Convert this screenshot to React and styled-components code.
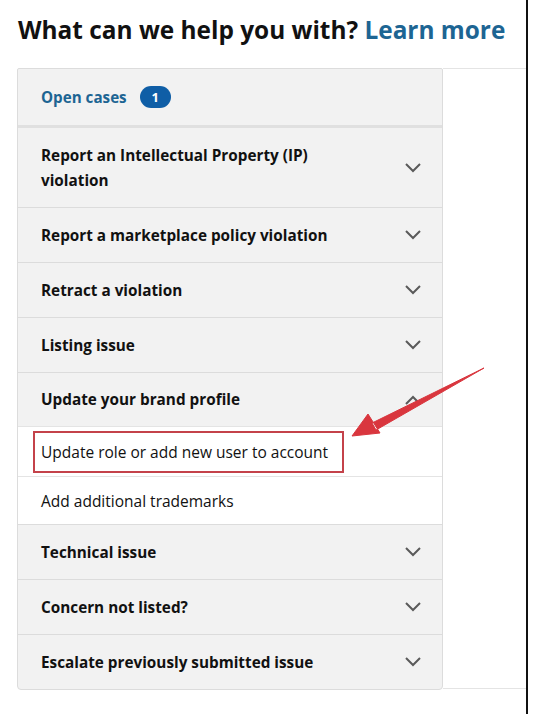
import React from "react";
import styled, { createGlobalStyle } from "styled-components";

const GlobalStyle = createGlobalStyle`
  html, body { margin: 0; padding: 0; background: #fff; }
  body { font-family: "Open Sans", "Noto Sans", sans-serif; color: #111; }
`;

const Page = styled.div`
  position: relative;
  width: 528px;
  height: 714px;
  box-sizing: border-box;
  border-right: 2px solid #111;
  padding: 14px 0 0 17px;
`;

const Heading = styled.h1`
  margin: 0 0 22px 1px;
  font-size: 24.4px;
  font-weight: 700;
  color: #111;
  line-height: 32px;
`;

const LearnMore = styled.a`
  color: #1d6593;
  text-decoration: none;
`;

const Content = styled.div`
  display: flex;
`;

const Panel = styled.div`
  width: 426px;
  box-sizing: border-box;
  background: #f2f2f2;
  border: 1px solid #dcdcdc;
  border-radius: 2px 2px 4px 4px;
`;

const Side = styled.div`
  flex: 1;
  height: 621px;
  box-sizing: border-box;
  border-top: 1px solid #e4e4e4;
  border-bottom: 1px solid #e4e4e4;
`;

const CasesBar = styled.div`
  display: flex;
  align-items: center;
  gap: 13px;
  height: 56px;
  padding-left: 23px;
  border-bottom: 3px solid #e0e0e0;
  font-size: 15.2px;
  font-weight: 700;
  color: #1d6593;
`;

const Badge = styled.span`
  display: inline-flex;
  align-items: center;
  justify-content: center;
  width: 31px;
  height: 22px;
  border-radius: 11px;
  background: #0f5ea6;
  color: #fff;
  font-size: 13px;
  font-weight: 700;
`;

const Row = styled.div`
  display: flex;
  align-items: center;
  justify-content: space-between;
  height: ${(p) => p.$h || 54}px;
  padding: 0 20px 0 23px;
  border-top: 1px solid #dcdcdc;
  font-size: 15.3px;
  font-weight: 700;
  line-height: 25px;
  color: #111;
  &:first-of-type { border-top: none; }
`;

const RowLabel = styled.span`
  max-width: 310px;
`;

const SubItem = styled.div`
  display: flex;
  align-items: center;
  height: ${(p) => p.$h || 49}px;
  padding-left: 23px;
  background: #fff;
  border-top: 1px solid #e4e4e4;
  font-size: 15.5px;
  color: #111;
`;

const Marked = styled.span`
  display: inline-block;
  margin-left: -8px;
  padding: 8px 14px 8px 6px;
  border: 2px solid #c4424a;
`;

const Arrow = styled.svg`
  position: absolute;
  left: 340px;
  top: 360px;
  pointer-events: none;
`;

const Chevron = ({ up }) => (
  <svg width="18" height="12" viewBox="0 0 18 12">
    <path
      d={up ? "M2 10 L9 3 L16 10" : "M2 2 L9 9 L16 2"}
      fill="none"
      stroke="#5a5a5a"
      strokeWidth="2"
    />
  </svg>
);

const topics = [
  { label: "Report an Intellectual Property (IP) violation", h: 79 },
  { label: "Report a marketplace policy violation" },
  { label: "Retract a violation" },
  { label: "Listing issue" },
];

const bottomTopics = [
  "Technical issue",
  "Concern not listed?",
  "Escalate previously submitted issue",
];

export default function App() {
  return (
    <>
      <GlobalStyle />
      <Page>
        <Heading>
          What can we help you with? <LearnMore href="#">Learn more</LearnMore>
        </Heading>
        <Content>
          <Panel>
            <CasesBar>
              Open cases <Badge>1</Badge>
            </CasesBar>
            <div>
              {topics.map((t) => (
                <Row key={t.label} $h={t.h}>
                  <RowLabel>{t.label}</RowLabel>
                  <Chevron />
                </Row>
              ))}
              <Row $h={53}>
                <RowLabel>Update your brand profile</RowLabel>
                <Chevron up />
              </Row>
              <SubItem $h={49}>
                <Marked>Update role or add new user to account</Marked>
              </SubItem>
              <SubItem $h={47}>Add additional trademarks</SubItem>
              {bottomTopics.map((t) => (
                <Row key={t}>
                  <RowLabel>{t}</RowLabel>
                  <Chevron />
                </Row>
              ))}
            </div>
          </Panel>
          <Side />
        </Content>
        <Arrow width="150" height="90" viewBox="0 0 150 90">
          <path
            d="M144 8 L32 63 L36 70 Z M12 76 L28 54 L40 73 Z"
            fill="#d9363e"
            stroke="#d9363e"
            strokeWidth="1"
            strokeLinejoin="round"
          />
        </Arrow>
      </Page>
    </>
  );
}
